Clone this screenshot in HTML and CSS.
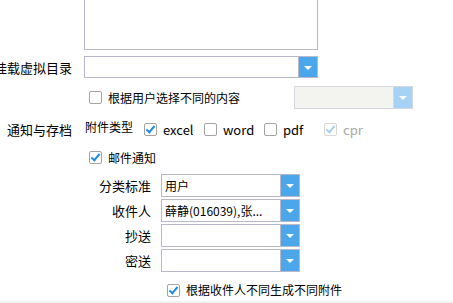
FILE: index.html
```html
<!DOCTYPE html>
<html lang="zh-CN">
<head>
    <meta charset="UTF-8">
    <title>通知与存档</title>
    <link rel="stylesheet" href="styles.css">
</head>
<body>
    <div class="form">
        <!-- Description textarea (top cut off) -->
        <div class="row row-area">
            <span class="label"></span>
            <div class="textarea"></div>
        </div>

        <!-- Mount directory -->
        <div class="row row-mount">
            <span class="label">挂载虚拟目录</span>
            <div class="combo combo-wide">
                <span class="combo-text"></span>
                <span class="combo-btn"><i class="arrow"></i></span>
            </div>
        </div>

        <div class="row row-byuser">
            <span class="label"></span>
            <label class="check">
                <span class="cb"></span>根据用户选择不同的内容
            </label>
            <div class="combo combo-disabled">
                <span class="combo-text"></span>
                <span class="combo-btn"><i class="arrow"></i></span>
            </div>
        </div>

        <!-- Attachment types -->
        <div class="row row-attach">
            <span class="label">通知与存档</span>
            <span class="attach-title">附件类型</span>
            <div class="options">
                <label class="check option"><span class="cb checked"></span>excel</label>
                <label class="check option"><span class="cb"></span>word</label>
                <label class="check option"><span class="cb"></span>pdf</label>
                <label class="check option disabled"><span class="cb checked"></span>cpr</label>
            </div>
        </div>

        <div class="row row-mail">
            <span class="label"></span>
            <label class="check"><span class="cb checked"></span>邮件通知</label>
        </div>

        <!-- Mail settings -->
        <div class="mail">
            <div class="mail-row">
                <span class="mail-label">分类标准</span>
                <div class="combo combo-mail">
                    <span class="combo-text">用户</span>
                    <span class="combo-btn"><i class="arrow"></i></span>
                </div>
            </div>
            <div class="mail-row">
                <span class="mail-label">收件人</span>
                <div class="combo combo-mail">
                    <span class="combo-text">薛静(016039),张...</span>
                    <span class="combo-btn"><i class="arrow"></i></span>
                </div>
            </div>
            <div class="mail-row">
                <span class="mail-label">抄送</span>
                <div class="combo combo-mail">
                    <span class="combo-text"></span>
                    <span class="combo-btn"><i class="arrow"></i></span>
                </div>
            </div>
            <div class="mail-row">
                <span class="mail-label">密送</span>
                <div class="combo combo-mail">
                    <span class="combo-text"></span>
                    <span class="combo-btn"><i class="arrow"></i></span>
                </div>
            </div>
            <div class="mail-row mail-split">
                <label class="check"><span class="cb checked"></span>根据收件人不同生成不同附件</label>
            </div>
        </div>
    </div>
    <div class="footer-bar"></div>
</body>
</html>
```

FILE: styles.css
```css
/* Page */
body {
    margin: 0;
    height: 303px;
    overflow: hidden;
    background: #fff;
    color: #000;
    font-family: "Noto Sans CJK SC", "Liberation Sans", sans-serif;
    font-size: 13px;
    line-height: 1;
}

.form {
    display: flex;
    flex-direction: column;
}

/* Generic row: label column + field */
.row {
    display: flex;
    align-items: center;
}

.label {
    flex: none;
    width: 72px;
    margin-right: 12px;
    display: flex;
    justify-content: flex-end;
    white-space: nowrap;
}

.row-area {
    margin-top: -12px;
    align-items: flex-start;
}

.textarea {
    width: 232px;
    height: 60px;
    border: 1px solid #b8b8ca;
}

.row-mount {
    margin-top: 6px;
}

.row-byuser {
    margin-top: 8px;
    height: 23px;
}

.row-attach {
    margin-top: 9px;
    height: 22px;
}

.row-mail {
    margin-top: 7px;
    height: 21px;
}

/* Checkboxes */
.check {
    display: flex;
    align-items: center;
    white-space: nowrap;
    margin-left: 5px;
    font-size: 12px;
}

.cb {
    flex: none;
    width: 11px;
    height: 11px;
    border: 1px solid #a3a3a3;
    border-radius: 2px;
    background: #fff;
    margin-right: 6px;
    position: relative;
}

.cb.checked::after {
    content: "";
    position: absolute;
    left: 3px;
    top: 0px;
    width: 3px;
    height: 7px;
    border-right: 2px solid #1e8ae6;
    border-bottom: 2px solid #1e8ae6;
    transform: rotate(40deg);
}

.check.disabled {
    color: #a8a8a8;
}

.check.disabled .cb {
    border-color: #d6d6d6;
}

.check.disabled .cb.checked::after {
    border-color: #a9cdef;
}

/* Attachment types */
.attach-title {
    font-size: 12px;
    margin-left: 1px;
    margin-bottom: 5px;
    width: 59px;
}

.options {
    display: flex;
}

.option {
    width: 60px;
    margin-left: 0;
    font-size: 13px;
}

/* Combo boxes */
.combo {
    flex: none;
    display: flex;
    height: 20px;
    border: 1px solid #b8b8ca;
    background: #fff;
}

.combo-wide {
    width: 232px;
}

.combo-disabled {
    width: 117px;
    height: 21px;
    margin-left: auto;
    margin-right: 40px;
    border-color: #d6d6de;
    background: #f3f3ef;
}

.combo-text {
    flex: 1;
    display: flex;
    align-items: center;
    padding-left: 3px;
    font-size: 12px;
    white-space: nowrap;
    overflow: hidden;
}

.combo-btn {
    flex: none;
    width: 18px;
    display: flex;
    align-items: center;
    justify-content: center;
    background: #4ba6ea;
    border-left: 1px solid #b8b8ca;
}

.combo-disabled .combo-btn {
    background: #a6d2f5;
    border-left-color: #d6d6de;
}

.arrow {
    width: 0;
    height: 0;
    border-left: 4px solid transparent;
    border-right: 4px solid transparent;
    border-top: 4px solid #fff;
    margin-top: 1px;
}

/* Mail section */
.mail {
    margin-top: 6px;
    padding-left: 84px;
    display: flex;
    flex-direction: column;
    gap: 2px;
}

.mail-row {
    display: flex;
    align-items: center;
}

.mail-label {
    width: 67px;
    margin-right: 10px;
    text-align: right;
    white-space: nowrap;
}

.combo-mail {
    width: 137px;
    height: 21px;
}

.mail-split {
    margin-top: 5px;
    height: 22px;
    padding-left: 78px;
}

.footer-bar {
    height: 4px;
    background: #f2f2f2;
}
```
